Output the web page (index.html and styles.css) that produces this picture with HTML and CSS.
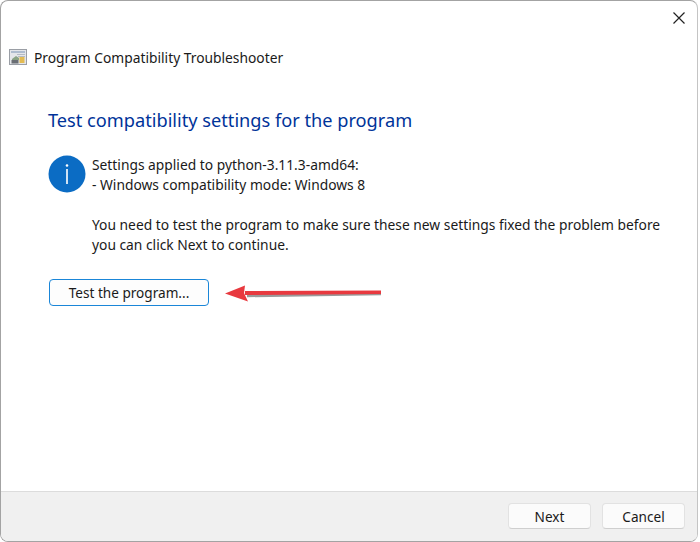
FILE: index.html
```html
<!DOCTYPE html>
<html>
<head>
    <link rel="stylesheet" href="styles.css">
</head>
<body>
    <div class="window">
        <button class="close-button">
            <svg class="close-icon" viewBox="0 0 14 14" fill="none" stroke="currentColor">
                <path d="M1.5 1.5l11 11M12.5 1.5l-11 11" stroke-width="1.2"/>
            </svg>
        </button>

        <div class="content">
            <div class="title-row">
                <svg class="app-icon" viewBox="0 0 18 16">
                    <rect x="0.5" y="0.5" width="17" height="15" fill="#e4e6ea" stroke="#9a9ea5"/>
                    <rect x="2" y="2" width="14" height="2" fill="#aebccf"/>
                    <path d="M8 5.5h8M9 7.5h7" stroke="#b4bac3"/>
                    <path d="M3 10l4-3 3 2v2H3z" fill="#8aa385"/>
                    <rect x="2.5" y="11" width="7" height="3.5" fill="#6a6e74"/>
                    <rect x="10.5" y="8" width="5" height="6" fill="#e3bb52"/>
                </svg>
                <span class="app-title">Program Compatibility Troubleshooter</span>
            </div>

            <h1>Test compatibility settings for the program</h1>

            <div class="info-row">
                <svg class="info-icon" viewBox="0 0 38 38">
                    <circle cx="19" cy="19" r="18.5" fill="#0b6cc4"/>
                    <circle cx="19" cy="10.5" r="1.3" fill="#fff"/>
                    <rect x="18.2" y="14" width="1.6" height="15" fill="#fff"/>
                </svg>
                <div class="info-text">
                    <p>Settings applied to python-3.11.3-amd64:<br>- Windows compatibility mode: Windows 8</p>
                    <p>You need to test the program to make sure these new settings fixed the problem before you can click Next to continue.</p>
                </div>
            </div>

            <div class="test-row">
                <button class="test-button">Test the program...</button>
                <svg class="arrow" viewBox="0 0 156 20">
                    <path d="M156 10.5L22 12.5" stroke="#9a9a9a" stroke-width="3.5" fill="none"/>
                    <path d="M156 7.5L20 8V12L156 11z" fill="#e8393f"/>
                    <path d="M0 10.5L20 2.5l-1 7.5 4 8.5z" fill="#e8393f"/>
                </svg>
            </div>
        </div>

        <div class="footer">
            <button>Next</button>
            <button>Cancel</button>
        </div>
    </div>
</body>
</html>
```

FILE: styles.css
```css
body {
    margin: 0;
    height: 542px;
    overflow: hidden;
    background: #fff;
    font-family: 'Noto Sans', sans-serif;
    color: #1a1a1a;
}

.window {
    position: relative;
    display: flex;
    flex-direction: column;
    height: 542px;
    box-sizing: border-box;
    margin-right: 2px;
    background: #fff;
    border: 1px solid #a3a3a3;
    border-right-color: #c4c4c4;
    border-radius: 8px;
    overflow: hidden;
}

.close-button {
    position: absolute;
    top: 10px;
    right: 11px;
    padding: 0;
    width: 14px;
    height: 14px;
    border: none;
    background: transparent;
    color: #222;
}

.close-icon {
    display: block;
    width: 14px;
    height: 14px;
}

.content {
    flex: 1;
    padding: 47px 0 0 8px;
}

.title-row {
    display: flex;
    align-items: center;
    gap: 7px;
    height: 18px;
}

.app-icon {
    width: 18px;
    height: 16px;
}

.app-title {
    font-size: 13.8px;
}

h1 {
    margin: 41px 0 0 39px;
    font-size: 18.2px;
    font-weight: 400;
    line-height: 26px;
    color: #003399;
}

.info-row {
    display: flex;
    gap: 6px;
    margin: 22px 0 0 39px;
}

.info-icon {
    flex: none;
    width: 38px;
    height: 38px;
}

.info-text {
    width: 580px;
    font-size: 13.8px;
    line-height: 20px;
}

.info-text p {
    margin: 0 0 20px 0;
}

.test-row {
    display: flex;
    align-items: center;
    gap: 16px;
    margin: 4px 0 0 40px;
}

button {
    font-family: 'Noto Sans', sans-serif;
    font-size: 13.6px;
    color: #1a1a1a;
}

.test-button {
    width: 160px;
    height: 27px;
    padding: 0;
    background: #fdfdfd;
    border: 1px solid #1a86d8;
    border-radius: 4px;
}

.arrow {
    width: 156px;
    height: 20px;
}

.footer {
    display: flex;
    justify-content: flex-end;
    gap: 11px;
    height: 50px;
    padding: 11px 12px 0 0;
    box-sizing: border-box;
    background: #f0f0f0;
    border-top: 1px solid #dcdcdc;
}

.footer button {
    width: 83px;
    height: 26px;
    padding: 0;
    background: #fbfbfb;
    border: 1px solid #e2e2e2;
    border-bottom-color: #cfcfcf;
    border-radius: 4px;
}
```
